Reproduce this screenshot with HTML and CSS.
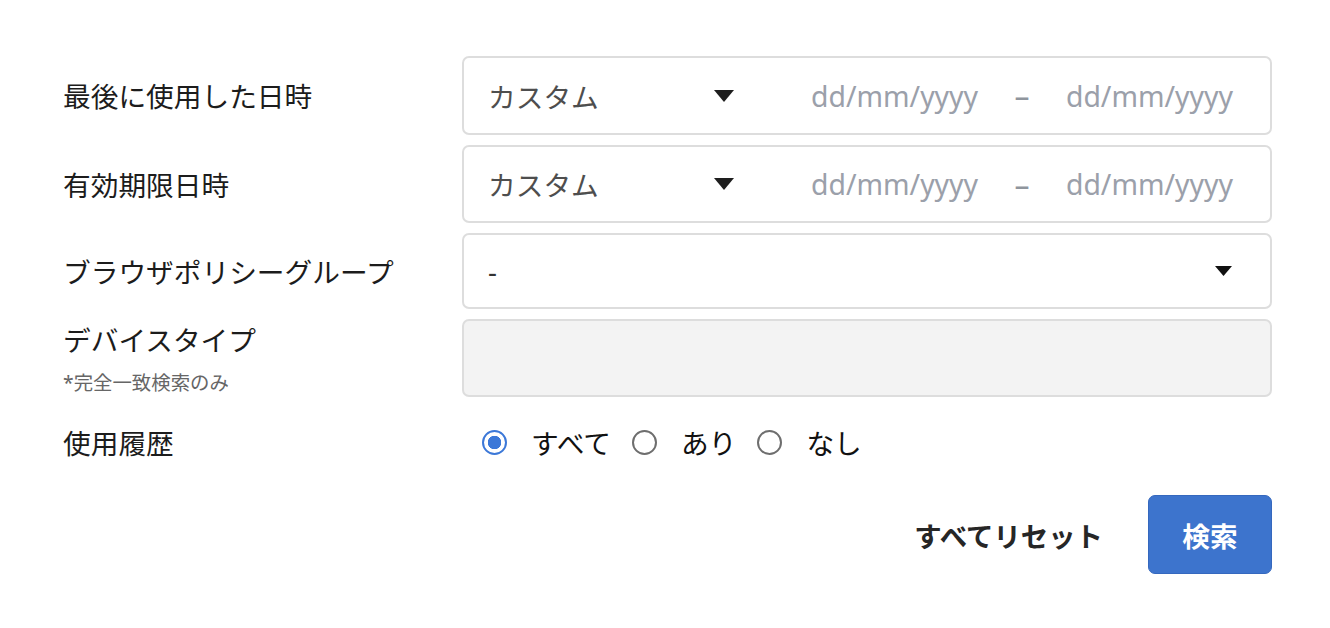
FILE: index.html
```html
<!DOCTYPE html>
<html lang="ja">
<head>
<meta charset="utf-8">
<title>検索フォーム</title>
<link rel="stylesheet" href="styles.css">
</head>
<body>
<div class="page">
  <div class="form">
    <div class="label">最後に使用した日時</div>
    <div class="field">
      <div class="select-seg">
        <span class="select-text">カスタム</span>
        <svg class="arrow" width="20" height="12" viewBox="0 0 20 12"><polygon points="0,0 20,0 10,12" fill="#1e1e1e"/></svg>
      </div>
      <div class="dates">
        <span class="date">dd/mm/yyyy</span>
        <span class="sep">–</span>
        <span class="date">dd/mm/yyyy</span>
      </div>
    </div>

    <div class="label">有効期限日時</div>
    <div class="field">
      <div class="select-seg">
        <span class="select-text">カスタム</span>
        <svg class="arrow" width="20" height="12" viewBox="0 0 20 12"><polygon points="0,0 20,0 10,12" fill="#1e1e1e"/></svg>
      </div>
      <div class="dates">
        <span class="date">dd/mm/yyyy</span>
        <span class="sep">–</span>
        <span class="date">dd/mm/yyyy</span>
      </div>
    </div>

    <div class="label">ブラウザポリシーグループ</div>
    <div class="field field-select">
      <span class="select-text">-</span>
      <svg class="arrow" width="17" height="10" viewBox="0 0 17 10"><polygon points="0,0 17,0 8.5,10" fill="#111"/></svg>
    </div>

    <div class="label label-top">
      <div>デバイスタイプ</div>
      <div class="note">*完全一致検索のみ</div>
    </div>
    <div class="field field-disabled"></div>

    <div class="label">使用履歴</div>
    <div class="radios">
      <label class="radio"><input type="radio" name="hist" checked><span>すべて</span></label>
      <label class="radio"><input type="radio" name="hist"><span>あり</span></label>
      <label class="radio"><input type="radio" name="hist"><span>なし</span></label>
    </div>
  </div>

  <div class="actions">
    <button class="reset" type="button">すべてリセット</button>
    <button class="search" type="button">検索</button>
  </div>
</div>
</body>
</html>
```

FILE: styles.css
```css
html, body {
  margin: 0;
  padding: 0;
  background: #ffffff;
}

body {
  font-family: "Noto Sans", "Noto Sans CJK JP", sans-serif;
  font-size: 27.7px;
  color: #1c1c1c;
}

.page {
  width: 1209px;
  padding: 56px 0 0 63px;
}

.form {
  display: grid;
  grid-template-columns: 399px 810px;
  grid-template-rows: 79px 78px 76px 78px 70px;
  row-gap: 10px;
}

.label {
  display: flex;
  align-items: center;
  line-height: 1.4;
  color: #1c1c1c;
  padding-top: 2px;
}

.label-top {
  flex-direction: column;
  align-items: flex-start;
  justify-content: flex-start;
  padding-top: 2px;
}

.note {
  margin-top: 10px;
  font-size: 19.4px;
  line-height: 26px;
  color: #666666;
}

.field {
  box-sizing: border-box;
  border: 2px solid #dddddd;
  border-radius: 7px;
  background: #ffffff;
  display: flex;
  align-items: center;
  padding: 0 37px 0 24px;
}

.select-seg {
  width: 246px;
  display: flex;
  align-items: center;
  justify-content: space-between;
  flex: none;
}

.select-text {
  color: #4e4e4e;
}

.arrow {
  display: block;
  flex: none;
}

.dates {
  flex: 1;
  display: flex;
  align-items: center;
  justify-content: space-between;
  padding-left: 77px;
}

.date {
  color: #9ba0aa;
  font-size: 28.4px;
}

.sep {
  color: #8f959d;
  font-size: 30px;
}

.field-select {
  justify-content: space-between;
  padding-right: 38px;
}

.field-select .select-text {
  color: #333333;
}

.field-disabled {
  background: #f3f3f3;
}

.radios {
  display: flex;
  align-items: center;
  padding-left: 20px;
  gap: 21px;
}

.radio {
  display: flex;
  align-items: center;
  gap: 24px;
  color: #111111;
}

.radio input {
  appearance: none;
  -webkit-appearance: none;
  margin: 0;
  width: 25px;
  height: 25px;
  border: 2px solid #6e6e6e;
  border-radius: 50%;
  box-sizing: border-box;
  background: #ffffff;
  flex: none;
}

.radio input:checked {
  border-color: #3c78d8;
  background: radial-gradient(circle, #3c78d8 0 6.5px, #ffffff 7px);
}

.actions {
  display: flex;
  justify-content: flex-end;
  align-items: center;
  margin-top: 18px;
  gap: 45px;
}

.reset {
  border: none;
  background: transparent;
  font-family: inherit;
  font-size: 27.4px;
  font-weight: 700;
  color: #262626;
  padding: 0;
  cursor: pointer;
}

.search {
  box-sizing: border-box;
  width: 124px;
  height: 79px;
  border: 1px solid #3568be;
  border-radius: 7px;
  background: #3d74cd;
  color: #ffffff;
  font-family: inherit;
  font-size: 27.7px;
  font-weight: 700;
  padding: 0;
  cursor: pointer;
}
```
